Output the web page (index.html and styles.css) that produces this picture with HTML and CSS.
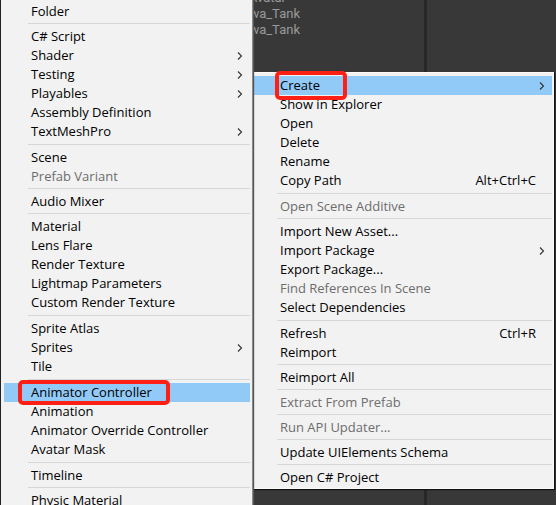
FILE: index.html
```
<!DOCTYPE html>
<html lang="en">

<head>
  <meta charset="UTF-8">
  <meta name="viewport" content="width=device-width, initial-scale=1.0">
  <title>Create Menu</title>
  <link rel="stylesheet" href="styles.css">
</head>

<body>
  <svg class="symbols" aria-hidden="true">
    <symbol id="arrow" viewBox="0 0 6 8">
      <path d="M1 .5 4.5 4 1 7.5" fill="none" stroke="#333" stroke-width="1.1" />
    </symbol>
  </svg>

  <main class="editor">
    <section class="panel project">
      <ul class="files">
        <li class="parent">Avatar</li>
        <li>wa_Tank</li>
        <li>wa_Tank</li>
      </ul>
    </section>
    <section class="panel inspector"></section>
  </main>

  <!-- Assets menu -->
  <nav class="menu assets-menu">
    <div class="group long">
      <button type="button" class="item selected"><span class="mark mark-wide">Create</span><svg class="arrow"><use href="#arrow" /></svg></button>
      <button type="button" class="item">Show in Explorer</button>
      <button type="button" class="item">Open</button>
      <button type="button" class="item">Delete</button>
      <button type="button" class="item">Rename</button>
      <button type="button" class="item">Copy Path<span class="shortcut">Alt+Ctrl+C</span></button>
    </div>
    <div class="group">
      <button type="button" class="item" disabled>Open Scene Additive</button>
    </div>
    <div class="group long">
      <button type="button" class="item">Import New Asset...</button>
      <button type="button" class="item">Import Package<svg class="arrow"><use href="#arrow" /></svg></button>
      <button type="button" class="item">Export Package...</button>
      <button type="button" class="item" disabled>Find References In Scene</button>
      <button type="button" class="item">Select Dependencies</button>
    </div>
    <div class="group">
      <button type="button" class="item">Refresh<span class="shortcut">Ctrl+R</span></button>
      <button type="button" class="item">Reimport</button>
    </div>
    <div class="group">
      <button type="button" class="item">Reimport All</button>
    </div>
    <div class="group">
      <button type="button" class="item" disabled>Extract From Prefab</button>
    </div>
    <div class="group">
      <button type="button" class="item" disabled>Run API Updater...</button>
    </div>
    <div class="group">
      <button type="button" class="item">Update UIElements Schema</button>
    </div>
    <div class="group">
      <button type="button" class="item">Open C# Project</button>
    </div>
  </nav>

  <!-- Create submenu -->
  <nav class="menu create-menu">
    <div class="group">
      <button type="button" class="item">Folder</button>
    </div>
    <div class="group long">
      <button type="button" class="item">C# Script</button>
      <button type="button" class="item">Shader<svg class="arrow"><use href="#arrow" /></svg></button>
      <button type="button" class="item">Testing<svg class="arrow"><use href="#arrow" /></svg></button>
      <button type="button" class="item">Playables<svg class="arrow"><use href="#arrow" /></svg></button>
      <button type="button" class="item">Assembly Definition</button>
      <button type="button" class="item">TextMeshPro<svg class="arrow"><use href="#arrow" /></svg></button>
    </div>
    <div class="group">
      <button type="button" class="item">Scene</button>
      <button type="button" class="item" disabled>Prefab Variant</button>
    </div>
    <div class="group">
      <button type="button" class="item">Audio Mixer</button>
    </div>
    <div class="group long">
      <button type="button" class="item">Material</button>
      <button type="button" class="item">Lens Flare</button>
      <button type="button" class="item">Render Texture</button>
      <button type="button" class="item">Lightmap Parameters</button>
      <button type="button" class="item">Custom Render Texture</button>
    </div>
    <div class="group long">
      <button type="button" class="item">Sprite Atlas</button>
      <button type="button" class="item">Sprites<svg class="arrow"><use href="#arrow" /></svg></button>
      <button type="button" class="item">Tile</button>
    </div>
    <div class="group long">
      <button type="button" class="item selected"><span class="mark">Animator Controller</span></button>
      <button type="button" class="item">Animation</button>
      <button type="button" class="item">Animator Override Controller</button>
      <button type="button" class="item">Avatar Mask</button>
    </div>
    <div class="group">
      <button type="button" class="item">Timeline</button>
    </div>
    <div class="group">
      <button type="button" class="item">Physic Material</button>
    </div>
  </nav>
</body>

</html>
```
FILE: styles.css
```
* {
  box-sizing: border-box;
}

body {
  margin: 0;
  height: 100vh;
  overflow: hidden;
  position: relative;
  background-color: #383838;
  font-family: "Open Sans", "Noto Sans", sans-serif;
  font-size: 13px;
}

.symbols {
  position: absolute;
  width: 0;
  height: 0;
}

.editor {
  display: flex;
  height: 100%;
}

.panel {
  flex: 1;
}

.project {
  flex: 0 0 427px;
  border-left: 1px solid #222222;
  border-right: 3px solid #272727;
}

.files {
  list-style: none;
  margin: -10px 0 0;
  padding: 0 124px 0 0;
  text-align: right;
  font-family: Roboto, sans-serif;
  line-height: 16px;
  color: #9a9a9a;
}

.files .parent {
  padding-right: 14px;
}

.menu {
  position: absolute;
  background-color: #f2f2f2;
}

.assets-menu {
  top: 72px;
  left: 252px;
  right: 2px;
  padding-right: 1px;
  border: 1px solid #fafafa;
  box-shadow: 1px 1px 1px #111111;
}

.create-menu {
  top: 0;
  left: 1px;
  width: 252px;
  padding: 0 2px 0 3px;
  border-right: 1px solid #8a8a8a;
  box-shadow: 1px 0 1px #555555;
}

.group {
  padding-top: 3px;
}

.create-menu .group:first-child {
  padding-top: 2px;
}

/* separator line between groups */
.group:not(:last-child)::after {
  content: "";
  display: block;
  height: 1px;
  margin: 2px 0 0 24px;
  background-color: #d7d7d7;
}

.group.long:not(:last-child)::after {
  margin-top: 3px;
}

.group:last-child {
  padding-bottom: 1px;
}

.item {
  display: flex;
  align-items: center;
  width: 100%;
  height: 19px;
  padding: 0 7px 0 27px;
  border: none;
  background: none;
  color: #000000;
  font: inherit;
  line-height: 19px;
  text-align: left;
  white-space: nowrap;
}

.item:disabled {
  color: #6d6d6d;
}

.item.selected {
  background-color: #91c9f7;
}

.shortcut {
  margin-left: auto;
  padding-right: 9px;
}

.arrow {
  width: 6px;
  height: 8px;
  margin-left: auto;
}

/* red marker around the chosen entries */
.mark {
  position: relative;
}

.mark::before {
  content: "";
  position: absolute;
  inset: -3px -18px -3px -13px;
  border: 4px solid #ff2015;
  border-radius: 5px;
}

.mark-wide::before {
  inset: -5px -27px -5px -5px;
}
```
